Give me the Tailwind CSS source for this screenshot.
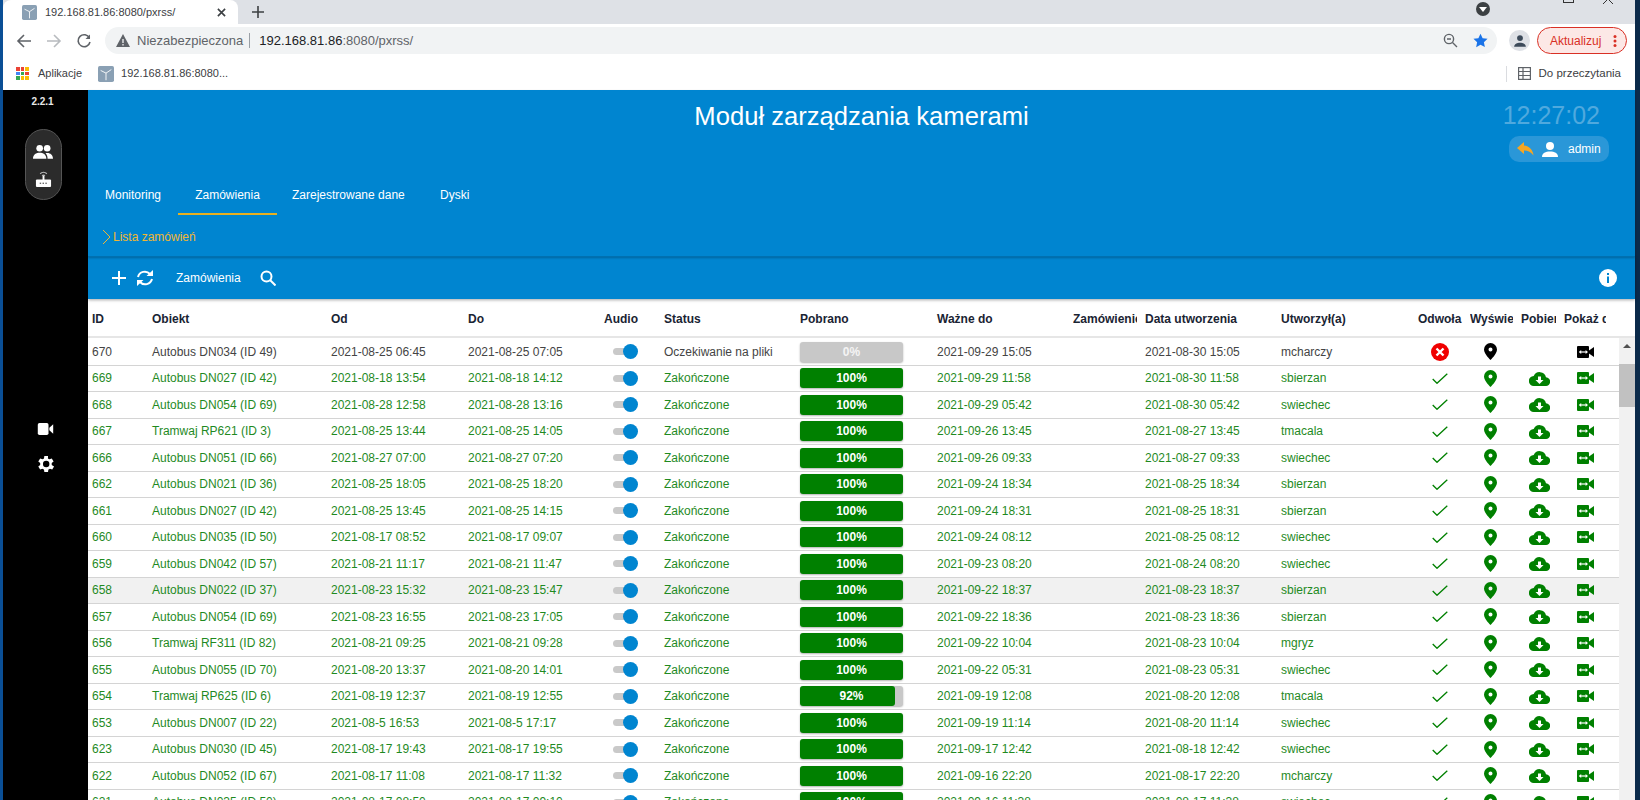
<!DOCTYPE html>
<html lang="pl">
<head>
    <meta charset="UTF-8">
    <title>192.168.81.86:8080/pxrss/</title>
    <script src="https://cdn.jsdelivr.net/npm/@tailwindcss/browser@4"></script>
</head>
<body class="h-[800px] w-[1640px] overflow-hidden bg-white font-['Liberation_Sans',Arial,sans-serif]">
<div class="flex h-[800px] flex-col border-l-[3px] border-r-[5px] border-l-[#0a4f96] border-r-[#0b2a4a]">

    <!-- Chrome: tabs -->
    <div class="flex h-[24px] items-center bg-[#dee1e6]">
        <div class="flex h-[24px] w-[235px] items-center rounded-t-lg bg-white pl-[19px] pr-[12px]">
            <svg class="h-[15px] w-[15px]" viewBox="0 0 18 18"><rect width="18" height="18" rx="2" fill="#8aa0b4"/><path d="M3 5l6 3 6-4M9 8v8" stroke="#fff" fill="none"/></svg>
            <span class="ml-[8px] flex-1 text-[11px] text-[#3c4043]">192.168.81.86:8080/pxrss/</span>
            <svg class="h-[9px] w-[9px]" viewBox="0 0 10 10"><path d="M1 1l8 8M9 1l-8 8" stroke="#3c4043" stroke-width="1.8"/></svg>
        </div>
        <svg class="ml-[14px] h-[12px] w-[12px]" viewBox="0 0 12 12"><path d="M6 0v12M0 6h12" stroke="#3c4043" stroke-width="1.6"/></svg>
        <div class="mb-[6px] ml-auto flex h-[14px] w-[14px] items-center justify-center rounded-full bg-[#3c4043]">
            <div class="h-0 w-0 border-x-[4px] border-t-[5px] border-x-transparent border-t-white"></div>
        </div>
        <div class="ml-[73px] h-[3px] w-[11px] self-start border-x border-b border-[#333]"></div>
        <svg class="ml-[26px] mr-[19px] h-[4px] w-[16px] self-start" viewBox="0 0 16 4" fill="none" stroke="#333"><path d="M7 0L3 4M9 0l4 4"/></svg>
    </div>

    <!-- Chrome: address bar -->
    <div class="flex h-[33px] items-center bg-white">
        <svg class="ml-[13px] h-[16px] w-[16px]" viewBox="0 0 16 16" fill="none" stroke="#5f6368" stroke-width="1.6"><path d="M15 8H2M8 2L2 8l6 6"/></svg>
        <svg class="ml-[14px] h-[16px] w-[16px]" viewBox="0 0 16 16" fill="none" stroke="#b8bbbf" stroke-width="1.6"><path d="M1 8h13M8 2l6 6-6 6"/></svg>
        <svg class="ml-[14px] h-[16px] w-[16px]" viewBox="0 0 16 16" fill="none" stroke="#5f6368" stroke-width="1.6"><path d="M13.5 5A6 6 0 1 0 14 9"/><path d="M14 1.5V6H9.5" fill="#5f6368" stroke="none"/></svg>
        <div class="ml-[13px] flex h-[27px] w-[1392px] flex-none items-center rounded-full bg-[#f1f3f4] pl-[11px]">
            <svg class="h-[13px] w-[14px]" viewBox="0 0 14 13"><path d="M7 0l7 13H0z" fill="#5f6368"/><path d="M7 5v4M7 10v1.5" stroke="#f1f3f4" stroke-width="1.3"/></svg>
            <span class="ml-[7px] text-[13px] text-[#5f6368]">Niezabezpieczona</span>
            <span class="ml-[6px] h-[15px] w-px bg-[#9aa0a6]"></span>
            <span class="ml-[9px] text-[13px] text-[#202124]">192.168.81.86<span class="text-[#5f6368]">:8080/pxrss/</span></span>
            <svg class="ml-auto h-[15px] w-[15px]" viewBox="0 0 15 15" fill="none" stroke="#5f6368" stroke-width="1.4"><circle cx="6" cy="6" r="4.6"/><path d="M9.5 9.5L14 14M4 6h4"/></svg>
            <svg class="ml-[15px] mr-[9px] h-[15px] w-[15px]" viewBox="0 0 24 24" fill="#1a73e8"><path d="M12 1l3.4 7.3 7.9.9-5.9 5.4 1.6 7.9L12 18.6l-7 4 1.6-7.9L.7 9.2l7.9-.9z"/></svg>
        </div>
        <div class="ml-[12px] flex h-[21px] w-[21px] items-center justify-center rounded-full bg-[#dee1e6]">
            <svg class="h-[14px] w-[14px]" viewBox="0 0 24 24" fill="#3c4a5a"><circle cx="12" cy="7" r="5"/><path d="M2 22c0-5 5-7 10-7s10 2 10 7z"/></svg>
        </div>
        <div class="ml-[7px] flex h-[27px] w-[90px] items-center rounded-full border border-[#d93025] bg-[#fce8e6] pl-[12px]">
            <span class="text-[12px] text-[#d93025]">Aktualizuj</span>
            <svg class="ml-[12px] h-[12px] w-[4px]" viewBox="0 0 4 12" fill="#d93025"><circle cx="2" cy="1.5" r="1.5"/><circle cx="2" cy="6" r="1.5"/><circle cx="2" cy="10.5" r="1.5"/></svg>
        </div>
    </div>

    <!-- Chrome: bookmarks -->
    <div class="flex h-[33px] items-center bg-white">
        <div class="ml-[13px] grid h-[13px] w-[13px] grid-cols-3 gap-px">
            <i class="bg-[#ea4335]"></i><i class="bg-[#ea4335]"></i><i class="bg-[#fbbc04]"></i>
            <i class="bg-[#4285f4]"></i><i class="bg-[#34a853]"></i><i class="bg-[#ea4335]"></i>
            <i class="bg-[#34a853]"></i><i class="bg-[#fbbc04]"></i><i class="bg-[#fbbc04]"></i>
        </div>
        <span class="ml-[9px] text-[11px] text-[#3c4043]">Aplikacje</span>
        <svg class="ml-[16px] h-[16px] w-[16px]" viewBox="0 0 18 18"><rect width="18" height="18" rx="2" fill="#8aa0b4"/><path d="M3 5l6 3 6-4M9 8v8" stroke="#fff" fill="none"/></svg>
        <span class="ml-[7px] text-[11px] text-[#3c4043]">192.168.81.86:8080...</span>
        <span class="ml-auto h-[16px] w-px bg-[#dadce0]"></span>
        <svg class="ml-[11px] h-[13px] w-[13px]" viewBox="0 0 13 13" fill="none" stroke="#5f6368" stroke-width="1.2"><rect x=".6" y=".6" width="11.8" height="11.8"/><path d="M.6 4.5h11.8M.6 8.5h11.8M5 .6v11.8"/></svg>
        <span class="ml-[8px] mr-[14px] text-[11.5px] text-[#3c4043]">Do przeczytania</span>
    </div>

    <!-- App -->
    <div class="flex min-h-0 flex-1">
        <aside class="flex w-[85px] flex-none flex-col items-center bg-black">
            <div class="mt-[6px] pr-[6px] text-[10px] font-bold leading-[12px] text-[#e8e8e8]">2.2.1</div>
            <div class="mt-[21px] mr-[5px] flex h-[71px] w-[37px] flex-col items-center rounded-full border border-[#555] bg-[#2b2b2b] pt-[14px]">
                <svg class="h-[16px] w-[20px]" viewBox="0 0 24 18" fill="#fff"><circle cx="8" cy="4.5" r="4"/><circle cx="17" cy="4.5" r="4"/><path d="M0 17c0-5 4-7 8-7s8 2 8 7zM17.500 17c0-3-1-5-2.500-6.500 4-1.500 9 1 9 6.500z"/></svg>
                <svg class="mt-[9px] h-[19px] w-[17px]" viewBox="0 0 18 20"><path d="M5.500 5a5 5 0 0 1 7 0M7.500 7a2 2 0 0 1 3 0" fill="none" stroke="#bbb" stroke-width="1.300"/><rect x="8" y="7" width="2" height="5" fill="#fff"/><rect x="1" y="11" width="16" height="8" rx="1" fill="#fff"/><path d="M5 15h1.500M8 15h1.500M11 15h1.500" stroke="#222"/></svg>
            </div>
            <svg class="mt-[223px] h-[12px] w-[17px]" viewBox="0 0 18 14" fill="#fff"><rect width="12.500" height="14" rx="2"/><path d="M13.500 5.500L18 1.500v11l-4.500-4z"/></svg>
            <svg class="mt-[18px] h-[22px] w-[22px]" viewBox="0 0 24 24" fill="#fff"><path d="M19.400 13a7.500 7.500 0 0 0 0-2l2.100-1.600-2-3.500-2.500 1a7.500 7.500 0 0 0-1.700-1L15.400 3.300h-4L11 5.900a7.500 7.500 0 0 0-1.700 1l-2.500-1-2 3.500L6.900 11a7.500 7.500 0 0 0 0 2l-2.100 1.600 2 3.500 2.500-1a7.500 7.500 0 0 0 1.700 1l.4 2.600h4l.4-2.600a7.500 7.500 0 0 0 1.700-1l2.500 1 2-3.500zM13.400 15.500a3.500 3.500 0 1 1 0-7 3.500 3.500 0 0 1 0 7z" transform="translate(-1.200 0)"/></svg>
        </aside>

        <main class="flex min-w-0 flex-1 flex-col">
            <!-- Blue header -->
            <header class="relative h-[167px] flex-none border-b border-[#0070b0] bg-[#0085d0] shadow-[0_1px_2px_rgba(0,0,0,0.25)]">
                <h1 class="pt-[11px] text-center text-[25.6px] leading-[30px] text-white">Moduł zarządzania kamerami</h1>
                <div class="absolute right-[35px] top-[10px] text-[25px] leading-[30px] text-[#4fa9de]">12:27:02</div>
                <div class="absolute right-[26px] top-[46px] flex h-[26px] w-[100px] items-center rounded-[10px] bg-[#2a97d8] pl-[8px]">
                    <svg class="h-[14px] w-[17px]" viewBox="0 0 17 14" fill="#f5a623"><path d="M7 0L0 6l7 6V8.500c4 0 7 1.500 9.500 5C16 8 12.500 4 7 3.500z"/></svg>
                    <svg class="ml-[8px] h-[15px] w-[16px]" viewBox="0 0 16 15" fill="#fff"><circle cx="8" cy="4" r="4"/><path d="M0 15c0-4 3.500-5.500 8-5.500s8 1.500 8 5.500z"/></svg>
                    <span class="ml-[10px] text-[12px] text-white">admin</span>
                </div>
                <nav class="absolute left-0 top-[95px] flex h-[30px] text-[12px] leading-[20px] text-white">
                    <a class="w-[90px] pl-[17px]">Monitoring</a>
                    <a class="w-[99px] border-b-2 border-[#e8b020] text-center">Zamówienia</a>
                    <a class="ml-[15px] w-[148px]">Zarejestrowane dane</a>
                    <a>Dyski</a>
                </nav>
                <div class="absolute left-[14px] top-[138px] flex items-center text-[12px] leading-[18px] text-[#f2b632]">
                    <svg class="mr-[2px] h-[16px] w-[9px]" viewBox="0 0 9 16" fill="none" stroke="#f2b632"><path d="M1 1l7 7-7 7"/></svg>
                    Lista zamówień
                </div>
            </header>

            <!-- Toolbar -->
            <div class="flex h-[42px] flex-none items-center bg-[#0085d0] text-white shadow-[0_1px_3px_rgba(0,0,0,0.35)]">
                <svg class="ml-[24px] h-[14px] w-[14px]" viewBox="0 0 14 14"><path d="M7 0v14M0 7h14" stroke="#fff" stroke-width="2"/></svg>
                <svg class="ml-[10px] h-[16px] w-[18px]" viewBox="0 0 18 16" fill="none" stroke="#fff" stroke-width="2"><path d="M2 7a7 7 0 0 1 12-3M16 9a7 7 0 0 1-12 3"/><path d="M10.500 6H17V0zM7.500 10H1v6z" fill="#fff" stroke="none"/></svg>
                <span class="ml-[22px] text-[12px]">Zamówienia</span>
                <svg class="ml-[19px] h-[16px] w-[16px]" viewBox="0 0 16 16" fill="none" stroke="#fff" stroke-width="2"><circle cx="6.500" cy="6.500" r="5"/><path d="M10 10l5.500 5.500"/></svg>
                <svg class="ml-auto mr-[18px] h-[18px] w-[18px]" viewBox="0 0 18 18"><circle cx="9" cy="9" r="9" fill="#fff"/><path d="M9 4v2M9 7.500V14" stroke="#0085d0" stroke-width="2"/></svg>
            </div>

            <!-- Table -->
            <div class="relative min-h-0 flex-1 overflow-hidden">
                <div id="tableHead" class="grid h-[39px] grid-cols-[60px_179px_137px_136px_60px_136px_137px_136px_72px_136px_137px_52px_51px_43px_42px_13px] items-center border-b-2 border-[#e6e6e6] pl-[4px] pr-0 pt-[2px] text-[12px] font-semibold text-[#1a2433]">
                    <div>ID</div><div>Obiekt</div><div>Od</div><div>Do</div><div>Audio</div><div>Status</div><div>Pobrano</div><div>Ważne do</div>
                    <div class="mr-[8px] overflow-hidden whitespace-nowrap">Zamówienie</div><div>Data utworzenia</div><div>Utworzył(a)</div>
                    <div>Odwoła</div><div class="mr-[8px] overflow-hidden whitespace-nowrap">Wyświetl</div><div class="mr-[8px] overflow-hidden whitespace-nowrap">Pobierz</div><div class="overflow-hidden whitespace-nowrap">Pokaż dane</div>
                </div>
                <div id="rows" class="mr-[16px] pt-px"></div>
                <!-- scrollbar -->
                <div class="absolute bottom-0 right-0 top-[39px] w-[16px] bg-[#f1f1f1]">
                    <div class="mx-auto mt-[6px] h-0 w-0 border-x-[4px] border-b-[4px] border-x-transparent border-b-[#505050]"></div>
                    <div class="mt-[16px] h-[43px] bg-[#c1c1c1]"></div>
                </div>
            </div>
        </main>
    </div>
</div>

<script>
    const data = [
        [670, "Autobus DN034 (ID 49)", "2021-08-25 06:45", "2021-08-25 07:05", "2021-09-29 15:05", "2021-08-30 15:05", "mcharczy"],
        [669, "Autobus DN027 (ID 42)", "2021-08-18 13:54", "2021-08-18 14:12", "2021-09-29 11:58", "2021-08-30 11:58", "sbierzan"],
        [668, "Autobus DN054 (ID 69)", "2021-08-28 12:58", "2021-08-28 13:16", "2021-09-29 05:42", "2021-08-30 05:42", "swiechec"],
        [667, "Tramwaj RP621 (ID 3)", "2021-08-25 13:44", "2021-08-25 14:05", "2021-09-26 13:45", "2021-08-27 13:45", "tmacala"],
        [666, "Autobus DN051 (ID 66)", "2021-08-27 07:00", "2021-08-27 07:20", "2021-09-26 09:33", "2021-08-27 09:33", "swiechec"],
        [662, "Autobus DN021 (ID 36)", "2021-08-25 18:05", "2021-08-25 18:20", "2021-09-24 18:34", "2021-08-25 18:34", "sbierzan"],
        [661, "Autobus DN027 (ID 42)", "2021-08-25 13:45", "2021-08-25 14:15", "2021-09-24 18:31", "2021-08-25 18:31", "sbierzan"],
        [660, "Autobus DN035 (ID 50)", "2021-08-17 08:52", "2021-08-17 09:07", "2021-09-24 08:12", "2021-08-25 08:12", "swiechec"],
        [659, "Autobus DN042 (ID 57)", "2021-08-21 11:17", "2021-08-21 11:47", "2021-09-23 08:20", "2021-08-24 08:20", "swiechec"],
        [658, "Autobus DN022 (ID 37)", "2021-08-23 15:32", "2021-08-23 15:47", "2021-09-22 18:37", "2021-08-23 18:37", "sbierzan"],
        [657, "Autobus DN054 (ID 69)", "2021-08-23 16:55", "2021-08-23 17:05", "2021-09-22 18:36", "2021-08-23 18:36", "sbierzan"],
        [656, "Tramwaj RF311 (ID 82)", "2021-08-21 09:25", "2021-08-21 09:28", "2021-09-22 10:04", "2021-08-23 10:04", "mgryz"],
        [655, "Autobus DN055 (ID 70)", "2021-08-20 13:37", "2021-08-20 14:01", "2021-09-22 05:31", "2021-08-23 05:31", "swiechec"],
        [654, "Tramwaj RP625 (ID 6)", "2021-08-19 12:37", "2021-08-19 12:55", "2021-09-19 12:08", "2021-08-20 12:08", "tmacala"],
        [653, "Autobus DN007 (ID 22)", "2021-08-5 16:53", "2021-08-5 17:17", "2021-09-19 11:14", "2021-08-20 11:14", "swiechec"],
        [623, "Autobus DN030 (ID 45)", "2021-08-17 19:43", "2021-08-17 19:55", "2021-09-17 12:42", "2021-08-18 12:42", "swiechec"],
        [622, "Autobus DN052 (ID 67)", "2021-08-17 11:08", "2021-08-17 11:32", "2021-09-16 22:20", "2021-08-17 22:20", "mcharczy"],
        [621, "Autobus DN035 (ID 50)", "2021-08-17 08:50", "2021-08-17 09:10", "2021-09-16 11:38", "2021-08-17 11:38", "swiechec"],
    ];

    const pin = c => `<svg class="h-[17px] w-[13px]" viewBox="0 0 13 17"><path fill-rule="evenodd" fill="${c}" d="M6.500 0A6.500 6.500 0 0 0 0 6.500C0 11 6.500 17 6.500 17S13 11 13 6.500A6.500 6.500 0 0 0 6.500 0zm0 4.500a2 2 0 1 1 0 4 2 2 0 0 1 0-4z"/></svg>`;
    const cam = c => `<svg class="h-[12px] w-[17px]" viewBox="0 0 17 12"><rect width="12" height="12" rx="1" fill="${c}"/><path d="M12 4.500L17 1v10l-5-3.500z" fill="${c}"/><path d="M3.500 6h6" stroke="#fff" stroke-width="1.200"/><path d="M1.800 6l2.400-2v4zM11 6L8.600 4v4z" fill="#fff"/></svg>`;
    const cloud = `<svg class="h-[15px] w-[21px]" viewBox="0 0 21 15"><path fill="#008000" d="M17 6.200A6.500 6.500 0 0 0 4.700 5 5 5 0 0 0 5 15h11.500a4.400 4.400 0 0 0 .5-8.800z"/><path fill="#fff" d="M9 5.500h3v3.500h2.500l-4 4-4-4H9z"/></svg>`;
    const check = `<svg class="h-[11px] w-[16px]" viewBox="0 0 16 11" fill="none" stroke="#008000" stroke-width="1.300"><path d="M.7 6l4.300 4.300L15.300.7"/></svg>`;
    const cancel = `<svg class="h-[18px] w-[18px]" viewBox="0 0 18 18"><circle cx="9" cy="9" r="9" fill="#f00000"/><path d="M5.500 5.500l7 7M12.500 5.500l-7 7" stroke="#fff" stroke-width="2.400"/></svg>`;

    function progress(id) {
        if (id === 670) return `<div class="flex h-[20px] w-[103px] items-center justify-center rounded-[3px] bg-[#c8c8c8] text-[12px] font-bold text-white/80 shadow-[0_1px_2px_rgba(0,0,0,0.3)]">0%</div>`;
        const pct = id === 654 ? 92 : 100;
        return `<div class="relative h-[20px] w-[103px] rounded-[3px] bg-[#c8c8c8] text-center text-[12px] font-bold leading-[20px] text-white shadow-[0_1px_2px_rgba(0,0,0,0.3)]">
            <div class="absolute inset-y-0 left-0 rounded-[3px] bg-[#008000]" style="width:${pct}%"></div><span class="relative">${pct}%</span></div>`;
    }

    document.getElementById("rows").innerHTML = data.map(r => {
        const [id, obj, od, doo, wazne, utw, kto] = r;
        const waiting = id === 670;
        const color = waiting ? "text-[#444444]" : "text-[#1f8a1f]";
        const bg = id === 658 ? "bg-[#f1f1f1]" : "bg-white";
        const iconColor = waiting ? "#000000" : "#008000";
        return `<div class="grid h-[26.5px] grid-cols-[60px_179px_137px_136px_60px_136px_137px_136px_72px_136px_137px_52px_51px_43px_42px] items-center border-b border-[#d4d4d4] pl-[4px] text-[12px] ${bg} ${color}">
            <div>${id}</div><div>${obj}</div><div>${od}</div><div>${doo}</div>
            <div class="pl-[9px]"><div class="relative h-[7px] w-[17px] rounded-full bg-[#c9c9c9]"><div class="absolute -top-[4px] left-[10px] h-[15px] w-[15px] rounded-full bg-[#0085d0]"></div></div></div>
            <div>${waiting ? "Oczekiwanie na pliki" : "Zakończone"}</div>
            <div>${progress(id)}</div>
            <div>${wazne}</div><div></div><div>${utw}</div><div>${kto}</div>
            <div class="flex justify-center pr-[8px]">${waiting ? cancel : check}</div>
            <div class="flex justify-center pr-[10px]">${pin(iconColor)}</div>
            <div class="flex justify-center pr-[6px]">${waiting ? "" : cloud}</div>
            <div class="flex justify-center">${cam(iconColor)}</div>
        </div>`;
    }).join("");
</script>
</body>
</html>
